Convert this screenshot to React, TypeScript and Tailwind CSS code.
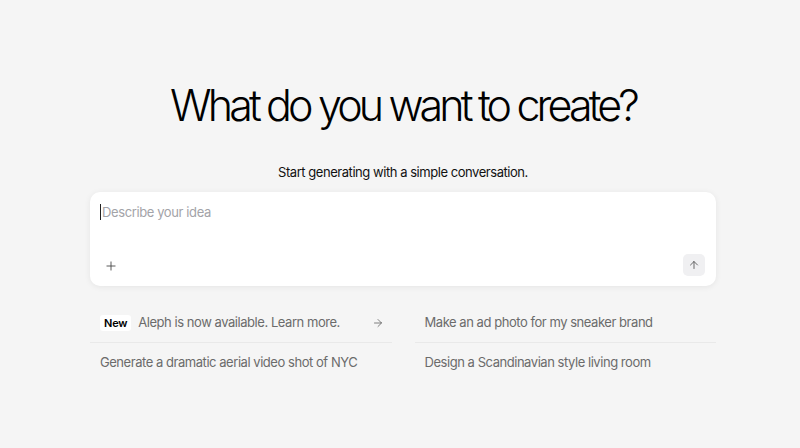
import { ArrowRight, ArrowUp, Plus } from "lucide-react";

const SUGGESTIONS = [
  { id: "aleph", text: "Aleph is now available. Learn more.", badge: true },
  { id: "sneaker", text: "Make an ad photo for my sneaker brand" },
  { id: "nyc", text: "Generate a dramatic aerial video shot of NYC" },
  { id: "living", text: "Design a Scandinavian style living room" },
];

export default function App() {
  return (
    <div
      className="min-h-[448px] w-full bg-[#f5f5f5] text-black"
      style={{ fontFamily: "Inter, 'Noto Sans', sans-serif" }}
    >
      <div className="mx-auto flex w-[626px] translate-x-[3px] flex-col items-center pt-[80px]">
        <h1 className="text-[43px] leading-[50px] font-light tracking-[-0.09em]">
          What do you want to create?
        </h1>
        <p className="mt-[32px] text-[13px] leading-[20px] tracking-[-0.035em] text-[#111]">
          Start generating with a simple conversation.
        </p>

        <div className="mt-[10px] flex h-[94px] w-full flex-col justify-between rounded-[10px] bg-white px-[10px] pt-[10px] pb-[10px] shadow-[0_1px_6px_rgba(0,0,0,0.07)]">
          <div className="flex items-center text-[13px] leading-[20px] tracking-[-0.03em] text-[#a3a3a8]">
            <span className="mr-px h-[16px] w-px bg-[#222]" />
            Describe your idea
          </div>
          <div className="flex items-end justify-between">
            <button className="mb-[-1px] flex h-[22px] w-[22px] items-center justify-center text-[#444]">
              <Plus size={14} strokeWidth={1.5} />
            </button>
            <button className="mr-[1px] flex h-[22px] w-[22px] items-center justify-center rounded-[5px] bg-[#f0f0f2] text-[#555]">
              <ArrowUp size={12} strokeWidth={1.75} />
            </button>
          </div>
        </div>

        <div className="mt-[17px] grid w-full grid-cols-2 gap-x-[23px]">
          {SUGGESTIONS.map((s, i) => (
            <div
              key={s.id}
              className={`flex h-[40px] items-center px-[10px] text-[13px] tracking-[-0.035em] text-[#6b6b6b] ${
                i < 2 ? "border-b border-[#e9e9e9]" : ""
              }`}
            >
              {s.badge && (
                <span className="mr-[7px] rounded-[3px] bg-white px-[4px] text-[11px] leading-[16px] font-semibold tracking-[-0.02em] text-black">
                  New
                </span>
              )}
              <span className="flex-1">{s.text}</span>
              {s.badge && <ArrowRight size={12} strokeWidth={1.5} className="mr-[-2px] text-[#555]" />}
            </div>
          ))}
        </div>
      </div>
    </div>
  );
}
